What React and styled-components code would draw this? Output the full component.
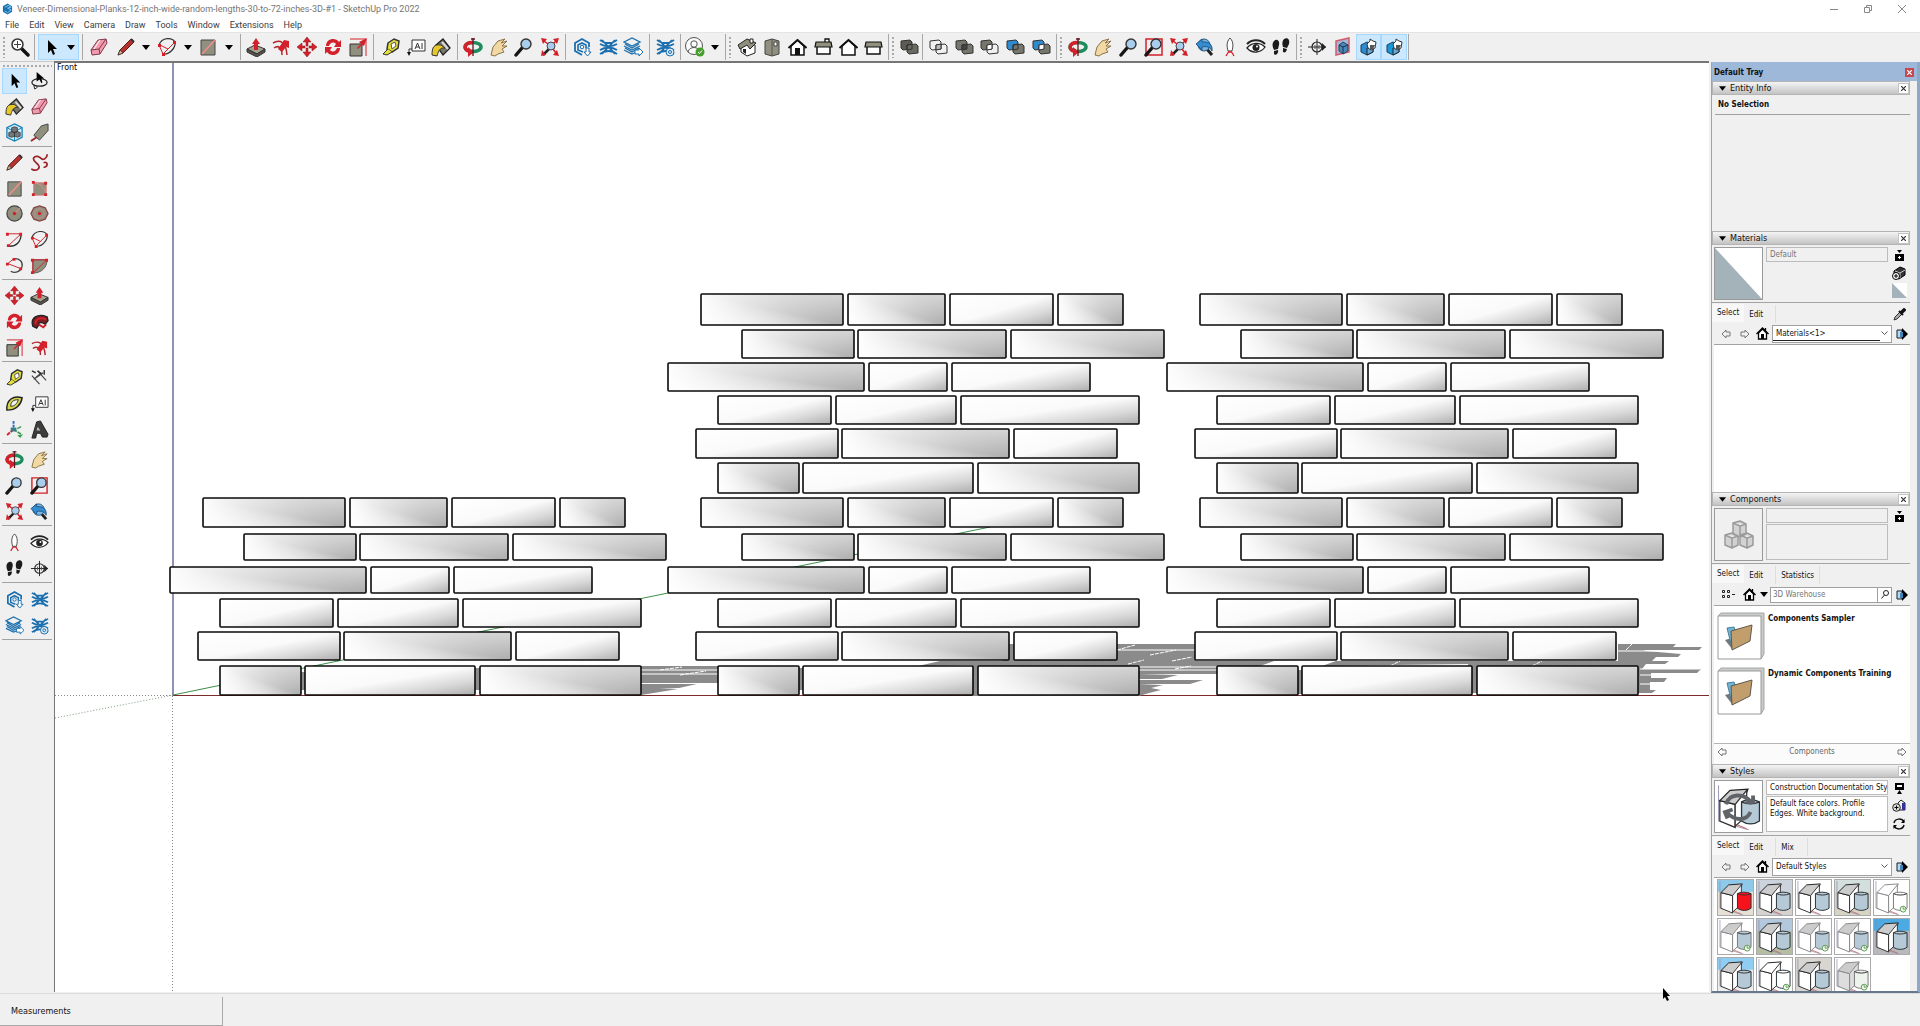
import React from "react";
import styled, { createGlobalStyle, css } from "styled-components";

const Global = createGlobalStyle`
  *, *::before, *::after { box-sizing: border-box; }
  html, body, #root { margin: 0; height: 100%; }
  body { background: #f0f0f0; color: #111; font: 9px/14px "DejaVu Sans Condensed", "DejaVu Sans", sans-serif; overflow: hidden; }
  button, input, select, textarea { font: inherit; color: inherit; margin: 0; border-radius: 0; }
  button { padding: 0; border: 0; background: none; }
  svg { display: block; flex: none; }
  h1, h2, p { margin: 0; font-weight: inherit; font-size: inherit; }
`;

/* ---------- frame ---------- */
const Page = styled.div`
  min-height: 100%; height: 100vh; display: flex; flex-direction: column;
`;
const TitleBar = styled.header`
  display: flex; align-items: center; height: 17px; padding: 0 12px 0 2px; background: #fff; color: #757575;
  font-family: Roboto, sans-serif; font-size: 9px;
  h1 { flex: 1; margin-left: 4px; white-space: nowrap; }
`;
const WindowButton = styled.button`
  width: 12px; height: 12px; margin-left: 22px; display: grid; place-items: center;
`;
const MenuBar = styled.nav`
  display: flex; align-items: center; gap: 10px; height: 15px; padding: 0 5px; background: #fff; color: #3d3d3d;
  font-family: Roboto, sans-serif; font-size: 9px;
`;
const MenuItem = styled.button`line-height: 14px;`;
const TopBar = styled.div`
  display: flex; align-items: stretch; height: 29px; padding: 1px 0; border-top: 1px solid #e4e4e4;
`;
const Workspace = styled.div`flex: 1; display: flex; min-height: 0;`;

const Group = styled.div`
  width: ${(p) => p.$w}px; padding: 0 ${(p) => p.$pad || 2}px; display: flex; flex: none;
`;
const Tool = styled.button`
  flex: 1; display: grid; place-items: center; min-width: 0;
  ${(p) => p.$on && css`background: #cce8ff; box-shadow: inset 0 0 0 1px #a6d8ff;`}
`;
const Split = styled.div`
  flex: 1; display: flex;
  ${(p) => p.$on && css`background: #cce8ff; box-shadow: inset 0 0 0 1px #a6d8ff;`}
`;
const Caret = styled.button`
  width: 16px; display: grid; place-items: center;
`;
const Rule = styled.i`width: 1px; background: #a8a8a8; flex: none;`;
const Grip = styled.i`
  width: 4px; flex: none; margin: 2px 0 2px 2px;
  background: radial-gradient(circle, #aaa 1px, transparent 1px) 0 0 / 4px 4px;
`;

const SideBar = styled.aside`
  width: 54px; flex: none; padding: 2px 2px 0; border-top: 1px solid #c8c8c8;
`;
const SideGrip = styled.i`
  display: block; height: 4px;
  background: radial-gradient(circle, #aaa 1px, transparent 1px) 0 0 / 4px 4px;
`;
const SideGroup = styled.div`
  display: grid; grid-template-columns: 25px 25px; justify-content: space-between; grid-auto-rows: 1fr;
  height: ${(p) => p.$h}px;
`;
const SideRule = styled.hr`height: 1px; border: 0; background: #a2a2a2; margin: 1px 0 3px;`;

const Viewport = styled.main`
  position: relative; flex: 1; min-width: 0; background: #fff; overflow: hidden;
  border: solid #767676; border-width: 2px 0 0 1px; margin-bottom: 1px;
`;
const ViewLabel = styled.span`
  position: absolute; left: 2px; top: -2px; font: 8px/14px "DejaVu Sans", sans-serif; color: #000;
`;
const StatusBar = styled.footer`
  position: relative; height: 33px; flex: none; padding: 3px 0 1px; border-top: 1px solid #dcdcdc;
`;
const Measure = styled.div`
  display: flex; align-items: center; width: 223px; height: 29px; padding-left: 11px;
  border: solid #a9a9a9; border-width: 0 1px 1px 0;
`;
const Pointer = styled.div`position: absolute; right: 250px; top: -6px;`;

/* ---------- tray ---------- */
const Tray = styled.aside`
  width: 209px; flex: none; display: flex; flex-direction: column; margin: 1px 0 0 2px;
  border: solid #8ea9c7; border-width: 0 3px 2px 1px; border-bottom-color: #68788c; background: #f0f0f0; font-size: 8px;
`;
const TrayTitle = styled.div`
  display: flex; align-items: center; justify-content: space-between; height: 19px; padding: 2px 3px 0 2px;
  background: #9db8d8; font-weight: bold;
`;
const TrayClose = styled.button`
  width: 9px; height: 9px; background: #c9484e; color: #fff; display: grid; place-items: center;
`;
const TrayBody = styled.div`
  flex: 1; min-height: 0; display: flex; flex-direction: column; margin-right: 7px; overflow: hidden;
`;
const PanelHead = styled.h2`
  display: flex; align-items: center; height: 14px; flex: none; padding-left: 6px; font-size: 9px;
  background: linear-gradient(#f4f4f4, #c3c3c3); border: 1px solid #b4b4b4;
  span { flex: 1; margin-left: 4px; }
`;
const PanelClose = styled.button`
  width: 11px; height: 11px; background: #fff; border: 1px solid #c4c4c4; display: grid; place-items: center;
`;
const Selection = styled.div`
  height: 136px; flex: none;
  p { margin: 0 0 0 3px; padding: 3px; height: 20px; font-weight: bold; border-bottom: 1px solid #a0a0a0; }
`;
const Summary = styled.div`
  display: flex; gap: 3px; height: 58px; flex: none; padding: 2px 3px 3px 2px; border-bottom: 1px solid #a3a3a3;
`;
const Preview = styled.div`
  width: 49px; height: 53px; flex: none; border: 1px solid #9a9a9a; background: ${(p) => p.$bg || "#f0f0f0"};
  display: grid; place-items: center; overflow: hidden;
`;
const Fields = styled.div`flex: 1; min-width: 0; display: flex; flex-direction: column; gap: 1px;`;
const fieldBox = css`
  width: 100%; padding: 0 3px; border: 1px solid #bcbcbc; background: ${(p) => (p.$white ? "#fff" : "#f0f0f0")};
  color: ${(p) => (p.$white ? "#111" : "#757575")}; outline: 0;
`;
const NameInput = styled.input`${fieldBox} height: 15px; padding-right: 0;`;
const Description = styled.textarea`${fieldBox} flex: 1; resize: none; line-height: 10px; padding-top: 2px; overflow: hidden;`;
const SideIcons = styled.div`
  width: 16px; display: flex; flex-direction: column; justify-content: ${(p) => (p.$top ? "flex-start" : "space-between")}; align-items: center; flex: none;
`;
const IconButton = styled.button`
  display: grid; place-items: center; width: ${(p) => p.$w || 16}px; height: 17px; flex: none;
`;
const Tabs = styled.div`
  display: flex; align-items: center; height: 22px; flex: none; padding: 0 3px 0 0;
`;
const Tab = styled.button`
  height: 18px; min-width: 32px; padding: 0 5px; text-align: left;
  ${(p) => (p.$on ? css`background: #f7f7f7; margin-bottom: 2px;` : css`border-right: 1px solid #dedede; padding-top: 2px;`)}
`;
const Spacer = styled.i`flex: 1;`;
const NavRow = styled.div`
  display: flex; align-items: center; gap: 2px; height: 20px; flex: none; padding: 0 0 2px 4px; margin-left: 2px; border-bottom: 1px solid #a3a3a3;
`;
const Picker = styled.label`
  flex: 1; min-width: 0; height: 18px; display: flex; align-items: center; background: #fff; border: 1px solid #a0a0a0; padding-right: 3px;
  select {
    appearance: none; flex: 1; min-width: 0; height: 14px; border: 0; padding: 0 3px; background: none; outline: 0; margin-right: 13px;
    ${(p) => p.$line && css`border-bottom: 1px solid #222;`}
  }
  svg { margin-left: -12px; }
`;
const SearchBox = styled.form`
  flex: 1; min-width: 0; height: 16px; display: flex; border: 1px solid #a0a0a0; background: #fff;
  input { flex: 1; min-width: 0; border: 0; padding: 0 2px; background: none; outline: 0; }
  input::placeholder { color: #757575; opacity: 1; }
  button { width: 14px; border-left: 1px solid #a0a0a0; display: grid; place-items: center; }
`;
const Blank = styled.div`height: 147px; flex: none; background: #fff; margin-left: 2px;`;
const FolderList = styled.ul`
  list-style: none; margin: 0 0 0 2px; padding: 6px 0 0 3px; height: 138px; flex: none; background: #fff; border-bottom: 1px solid #b5b5b5;
  li { display: flex; gap: 3px; height: 55px; font-weight: bold; white-space: nowrap; }
`;
const Pager = styled.div`
  display: flex; align-items: center; justify-content: space-between; height: 20px; flex: none; padding: 0 0 4px; color: #666; background: #fbfbfb; margin-left: 2px;
`;
const StyleGrid = styled.div`
  flex: 1; min-height: 0; overflow: hidden; display: grid; grid-template-columns: repeat(5, 37px); grid-auto-rows: 37px;
  gap: 2px; padding: 1px 0 0 3px; margin-left: 2px; background: #fff;
`;
const StyleButton = styled.button`border: 1px solid #aaa; overflow: hidden; display: grid; place-items: center;`;

/* ---------- icons ---------- */
const RED = "#d3202a", BLUE = "#1c6fae", STONE = "#918f7e";
const Glass = ({ x = 12, y = 7, r = 5 }) => (
  <>
    <path d={`M${x - r + 1} ${y + r - 1}L2 18`} stroke="#151515" strokeWidth="3.4" strokeLinecap="round" />
    <circle cx={x} cy={y} r={r} fill="#a9cdec" stroke="#333" strokeWidth="1.4" />
  </>
);
const House = ({ roof, chim, fill }) => (
  <>
    {chim && <path d="M12 2h4v6h-4z" fill="#fff" stroke="#111" strokeWidth="1.3" />}
    {roof === "side" ? (
      <><path d="M4 9h13v8H4z" fill="#fff" stroke="#111" strokeWidth="1.5" /><path d="M3 5h15l1 5H2z" fill={STONE} stroke="#111" strokeWidth="1.2" /></>
    ) : (
      <><path d="M4 9v9h13V9L10.500 3z" fill="#fff" stroke="#111" strokeWidth="1.5" /><path d="M1.500 11L10.500 3l9 8" fill="none" stroke="#111" strokeWidth="2" />{fill && <path d="M8 11h5v7H8z" fill="#111" />}</>
    )}
  </>
);
const Solid = ({ a, b, c = "none" }) => (
  <>
    <path d="M2 4l9-1 2 2v7l-9 1-2-2z" fill={a} stroke="#333" />
    <path d="M8 8l9-1 2 2v7l-9 1-2-2z" fill={b} stroke="#333" />
    <path d="M8 8l5-1v5l-5 1z" fill={c} stroke="#333" />
  </>
);
const Waves = () => (
  <path d="M2 3c5 4 12 4 17 0M2 7c5 3 12 3 17 0M2 13c5-3 12-3 17 0M2 17c5-4 12-4 17 0M4 3l13 14M17 3L4 17" fill="none" stroke={BLUE} strokeWidth="1.800" />
);
const Cube = ({ top = "#2f8bd0" }) => (
  <>
    <path d="M3 8l6-3 6 3v7l-6 3-6-3z" fill={top} stroke="#173d5c" />
    <path d="M9 11l6-3v7l-6 3z" fill="#68a9d8" stroke="#222" />
    <path d="M9 7l3-3V2l3 2 3 1-1 6-4 2-3-2z" fill="#fff" stroke="#333" /><path d="M12 8h5l-2 4h-3z" fill="#555" />
  </>
);
const ICONS = {
  search: <><path d="M11 11l7 7" stroke="#111" strokeWidth="3.400" strokeLinecap="round" /><circle cx="7.500" cy="7.500" r="5.500" fill="#fff" stroke="#333" strokeWidth="1.500" /><path d="M7.500 4v7M4 7.500h7" stroke="#444" /></>,
  arrow: <path d="M7 3v13l3-3 2 5 2-1-2-5h4z" fill="#000" />,
  lasso: <><ellipse cx="10" cy="12" rx="8" ry="4" fill="none" stroke="#222" strokeWidth="1.300" /><path d="M7 1v10l3-2 2 4 1-1-1-4h3z" fill="#000" /><path d="M4 15l1 4 3-2" fill="none" stroke="#222" /></>,
  eraser: <><path d="M2 13L9 3l8-1 1 4-7 11-8 1z" fill="#f29aae" stroke="#7e3949" /><path d="M2 13l8-1 1 5M10 12l7-10" fill="none" stroke="#7e3949" /><path d="M5 12l6-9" stroke="#fff" /></>,
  pencil: <><path d="M2 18l2-5L15 2l3 3L7 16z" fill="#b6322f" stroke="#5b1b16" /><path d="M2 18l2-5 3 3z" fill="#d5b28a" stroke="#333" strokeWidth=".7" /><path d="M15 2l3 3" stroke="#333" strokeWidth="2" /></>,
  freehand: <path d="M2 17c5 3 9-1 7-4S2 8 4 5s6-1 8 1 6-1 6-4M15 10c4-1 4 4 0 5" fill="none" stroke="#9c2329" strokeWidth="1.800" strokeLinecap="round" />,
  arc: <><path d="M2 8C5 0 15 0 18 5c1 5-5 13-12 12" fill="none" stroke="#333" strokeWidth="1.200" /><path d="M2 8l4 9L18 5M3 8l8 4" fill="none" stroke={RED} /><path d="M1 7h3v3H1zM5 16h3v3H5zM16 4h3v3h-3z" fill={RED} /></>,
  arc1: <><path d="M2 4h15L3 17" fill="none" stroke={RED} /><path d="M17 4c0 8-5 14-14 13" fill="none" stroke="#333" strokeWidth="1.400" /><path d="M1 3h3v3H1zM15 3h3v3h-3zM2 15h3v3H2z" fill={RED} /></>,
  arc3: <><path d="M9 3c6-1 10 3 9 8s-7 8-12 5" fill="none" stroke="#444" strokeWidth="1.300" /><path d="M9 3L3 8l13 5" fill="none" stroke={RED} /><path d="M1 7h3v3H1zM8 2h3v3H8zM15 12h3v3h-3z" fill={RED} /></>,
  pie: <><path d="M3 4h15c0 8-6 14-15 14z" fill={STONE} stroke="#555" /><path d="M3 18V4h15L3 18" fill="none" stroke={RED} /><path d="M1 3h3v3H1zM16 3h3v3h-3zM1 16h3v3H1z" fill={RED} /></>,
  rect: <><path d="M3 3h14v15H3z" fill={STONE} stroke="#444" /><path d="M4 17L17 3" stroke="#ef8d8d" strokeWidth="1.600" /></>,
  rotrect: <><path d="M4 4h13v13H4z" fill={STONE} stroke="#c77" /><path d="M4 4c6 0 12 5 13 13" fill="none" stroke="#e88" /><path d="M2 2h3v3H2zM15 3h3v3h-3zM2 15h3v3H2zM15 15h3v3h-3z" fill={RED} /></>,
  circle: <><circle cx="10" cy="10" r="8" fill={STONE} stroke="#444" strokeWidth="1.300" /><path d="M10 10l6-6" stroke="#f28a8a" /><circle cx="10" cy="10" r="1.800" fill={RED} /></>,
  polygon: <><path d="M10 2l6 2 3 6-3 6-6 2-6-2-3-6 3-6z" fill={STONE} stroke="#844" strokeWidth="1.300" /><circle cx="10" cy="10" r="5" fill="none" stroke="#c49090" /><circle cx="10" cy="10" r="1.800" fill={RED} /></>,
  push: <><path d="M1 12l8-4 10 4-8 5z" fill="#a5a28f" stroke="#333" /><path d="M1 12v3l10 5 8-5v-3l-8 5z" fill="#55544b" stroke="#333" /><path d="M8 13V7H6l4-6 4 6h-2v6z" fill={RED} /></>,
  offset: <><path d="M2 6c7-4 13-1 14 12M3 11c4-3 8-1 8 7" fill="none" stroke="#b3252c" strokeWidth="1.500" /><path d="M7 12l6-9 5 1v7l-3-1-4 5z" fill={RED} /></>,
  move: <path d="M10 0l4 5h-3v4h-2V5H6zM10 20l-4-5h3v-4h2v4h3zM0 10l5-4v3h3v2H5v3zM20 10l-5 4v-3h-3V9h3V6z" fill={RED} stroke="#8e1118" strokeWidth=".5" />,
  rotate: <path d="M3 9c0-8 10-9 13-4l2-2v7h-7l2-3c-3-3-6-1-7 2zM17 11c0 8-10 9-13 4l-2 2v-7h7l-2 3c3 3 6 1 7-2z" fill={RED} />,
  scale: <><path d="M2 7h12v12H2z" fill={STONE} stroke="#333" /><path d="M2 2h16v17" fill="none" stroke={RED} /><path d="M9 11l4-4-2-2 8-4-3 8-2-1-4 4z" fill={RED} /></>,
  follow: <><path d="M3 15C0 6 8 1 18 5l1 4-3 4c-3-3-8-2-7 1l-2 3z" fill="#7a1e22" stroke="#222" strokeWidth="1.400" /><path d="M6 13c-1-6 5-8 11-5M9 13l5 3 3-3" fill="none" stroke={RED} strokeWidth="2" /></>,
  tape: <><path d="M7 6l6-4 5 2-1 7-6 4-5-3z" fill="#e4df3a" stroke="#333" strokeWidth="1.500" /><path d="M10 7l4-2 1 4-4 3z" fill="#fff" stroke="#555" /><path d="M7 12l-5 5 4 1 5-3" fill="#e4df3a" stroke="#333" /></>,
  text: <><path d="M6 3h13v11H6z" fill="#fff" stroke="#333" /><path d="M9 12l2.500-6L14 12M10 10h3M16 6v6" fill="none" stroke="#333" /><path d="M6 12H3v5" fill="none" stroke="#333" /><path d="M1 15h4l-2 4z" fill="#111" /></>,
  paint: <><path d="M5 8l7-6 7 9-7 7z" fill="#77766a" stroke="#222" strokeWidth="1.300" /><path d="M1 18c0-8 2-11 9-10l4 3c-6-1-7 5-8 8z" fill="#e5c92b" stroke="#333" /><path d="M11 5l6 7" stroke="#ddd" strokeWidth="2" /></>,
  orbit: <><ellipse cx="10" cy="10" rx="8" ry="4.500" fill="none" stroke="#1e8c5d" strokeWidth="3.500" /><path d="M10 5.500C1 5 0 13 6 14" fill="none" stroke={RED} strokeWidth="3.500" /><path d="M5 10l6 5-6 5z" fill={RED} /><path d="M10 1v18M8 2h4" stroke="#5e1820" strokeWidth="1.300" /></>,
  pan: <path d="M2 18l2-8 5-6 7-2-4 4 6-2-5 5 5 0-5 3 2 3-6 2-3 2z" fill="#f2d9a4" stroke="#8b7347" />,
  zoom: <Glass />,
  window: <><path d="M2 2h16v16H2z" fill="none" stroke={RED} strokeWidth="1.500" /><Glass /></>,
  extents: <><path d="M9 12l-6 6" stroke="#222" strokeWidth="2.500" /><circle cx="11" cy="9" r="4" fill="#a9cdec" stroke="#444" /><path d="M1 1l6 1-4 5zM19 1l-6 1 4 5zM19 19l-6-1 4-5zM1 19l1-6 4 5z" fill={RED} /><path d="M4 4l4 3M16 4l-2 2M16 16l-3-4" stroke={RED} strokeWidth="1.500" /></>,
  prev: <><path d="M11 11l6 7" stroke="#222" strokeWidth="3" /><circle cx="9" cy="8" r="6" fill="#7cb5e4" stroke="#23567d" /><path d="M1 7l6-5v3c7-1 11 3 10 9-2-4-5-5-10-4v3z" fill="#358cd0" stroke="#174973" strokeWidth=".8" /></>,
  hex: <><path d="M17 10V6l-7-4-7 4v8l7 4" fill="none" stroke={BLUE} strokeWidth="1.800" /><path d="M14 11V8l-4-2-4 2v5l5 2" fill="none" stroke={BLUE} strokeWidth="1.600" /><circle cx="10" cy="10" r="1.800" fill="none" stroke={BLUE} /><path d="M14 11h3v4h2l-3.500 4-3.500-4h2z" fill="#fff" stroke={BLUE} /></>,
  waves: <Waves />,
  layers: <><path d="M1 5l8-4 8 4-8 4zM1 9l8 4 8-4M1 13l8 4 5-2M2 7l7 4 7-4M2 11l7 4 7-4" fill="none" stroke={BLUE} strokeWidth="1.300" /><path d="M12 13h4v-2l4 4-4 4v-2h-4z" fill="#fff" stroke={BLUE} /></>,
  manager: <><Waves /><circle cx="15" cy="15" r="4" fill="#d9ebf7" stroke={BLUE} /><circle cx="15" cy="15" r="1.500" fill="none" stroke={BLUE} /></>,
  user: <><circle cx="9" cy="9" r="8.500" fill="#fafafa" stroke="#555" /><circle cx="9" cy="7" r="3.200" fill="none" stroke="#555" /><path d="M3 15c1-6 11-6 12 0" fill="none" stroke="#555" /><circle cx="15" cy="15" r="4.500" fill="#46a12c" /><path d="M13 15l1.500 1.500L17 13.500" fill="none" stroke="#fff" /></>,
  iso: <><path d="M4 9l6-5 8 4v8l-8 3-6-4z" fill="#fff" stroke="#222" /><path d="M1 8l9-6 9 4-6 6-3-4-7 4z" fill={STONE} stroke="#222" /><path d="M6 12h3v5l-3-2z" fill="#222" /><path d="M13 2h3v4h-3z" fill="#fff" stroke="#222" /></>,
  top: <><path d="M3 4l7-2 7 2v13l-7 2-7-2z" fill={STONE} stroke="#444" /><path d="M10 2v17" stroke="#555" /><path d="M12 5h3v4h-3z" fill="#fff" stroke="#444" /></>,
  front: <House fill />, right: <House roof="side" chim />, back: <House />, left: <House roof="side" />,
  solid1: <Solid a="#5c5c55" b="#6b6a61" />, solid2: <Solid a="none" b="none" c="#bbb" />, solid3: <Solid a="#77766c" b="#77766c" c="#444" />,
  solid4: <Solid a="#77766c" b="none" c="#fff" />, solid5: <Solid a="#2f8bd0" b="#77766c" />, solid6: <Solid a="#2f8bd0" b="#77766c" c="#fff" />,
  camera: <><path d="M10 1c4 4 3 9 2 13H8C7 10 6 5 10 1z" fill="#fff" stroke="#444" /><path d="M6 19l3-5M14 19l-3-5M8 15h4" stroke={RED} strokeWidth="1.300" /></>,
  eye: <><path d="M1 11c5-6 13-6 18-1-4 6-13 7-18 1z" fill="#fff" stroke="#222" strokeWidth="1.300" /><path d="M1 7c5-5 13-5 18 0" fill="none" stroke="#222" strokeWidth="2" /><circle cx="10" cy="10.500" r="3.500" fill="#222" /><circle cx="11" cy="9.500" r="1" fill="#fff" /></>,
  feet: <><path d="M3 4c3-3 6 0 5 4l-1 4-4 1C1 9 1 6 3 4zM3 14l4-1c1 4-3 6-4 4zM13 2c4-2 6 1 5 5l-2 4-4-1c-1-3-1-6 1-8zM12 11l4 1c-1 5-5 4-4 1z" fill="#1b1b1b" /></>,
  section: <><path d="M10 2v16M1 10h18" stroke="#222" /><circle cx="10" cy="10" r="5" fill="none" stroke="#222" strokeWidth="1.200" /><path d="M15 6l4 4-4 4z" fill="#222" /><path d="M8 8v4M12 8v4" stroke="#555" /></>,
  plane: <><path d="M3 4l13-3v14L3 18z" fill="#9fb8dc" stroke="#d65a6c" strokeWidth="1.500" /><path d="M6 8l4-3 5 3v6l-5 3-4-3z" fill="#4787bd" stroke="#345" /><path d="M10 10v7M6 8l4 2 5-2" fill="none" stroke="#234" /></>,
  cut: <Cube />, fill: <Cube top="#1a98d8" />,
  component: <><path d="M10 1l8 4v10l-8 4-8-4V5z" fill="#d5eefb" stroke="#1784b8" strokeWidth="1.400" /><path d="M2 5l8 4 8-4M10 9v10" fill="none" stroke="#1784b8" /><g fill="#73777a" stroke="#333" strokeWidth=".8"><path d="M7 5l3-1 3 1v4l-3 1-3-1zM4 10l3-1 3 1v4l-3 1-3-1zM10 10l3-1 3 1v4l-3 1-3-1z" /></g></>,
  tag: <><path d="M4 13L12 3l7-2v7l-9 10z" fill="#918f7e" stroke="#444" /><path d="M1 19l6-4" stroke="#9b2730" strokeWidth="2" /></>,
  dim: <><path d="M2 8l8 9M8 3l9 10M5 11l7-6M4 12l10-7" fill="none" stroke="#444" strokeWidth="1.200" /><path d="M2 3l4 2M15 2v5M12 6l-4-3" stroke="#333" strokeWidth="1.500" /></>,
  protractor: <><path d="M2 17C1 6 9 1 18 4 17 11 12 17 2 17z" fill="#d6d44a" stroke="#222" strokeWidth="1.500" /><path d="M6 13c0-5 3-7 8-7-1 4-4 7-8 7z" fill="#f0f0f0" stroke="#333" /></>,
  axes: <><path d="M9 1v9" stroke="#2c69b7" strokeWidth="2" strokeDasharray="3 1" /><path d="M9 10l8 5" stroke="#3b9e50" strokeWidth="2" strokeDasharray="4 1" /><path d="M9 10l-7 6" stroke={RED} strokeWidth="2" strokeDasharray="4 1" /><path d="M13 9l4-2" stroke="#3b9e50" strokeWidth="1.500" /><path d="M6 8h6v4H6z" fill="#367b8c" /><path d="M13 16l6-1-3 4z" fill="#3b9e50" /></>,
  text3d: <><path d="M7 2l4-1 8 14-1 3h-5l-2-4H7l-1 5H2z" fill="#3d3d3b" stroke="#222" /><path d="M7 11l1-4 3 4z" fill="#bbb" /></>,
};
const Icon = ({ name, size = 20 }) => (
  <svg width={size} height={size} viewBox="0 0 20 20" fill="none" aria-hidden="true">{ICONS[name]}</svg>
);
const Down = ({ w = 8 }) => <svg width={w} height="5" viewBox="0 0 8 5"><path d="M0 0h8L4 5z" fill="#000" /></svg>;
const Cross = ({ c = "#333" }) => <svg width="5" height="5" viewBox="0 0 5 5"><path d="M0 0l5 5M5 0L0 5" stroke={c} strokeWidth="1.200" /></svg>;
const Nav = ({ back }) => (
  <svg width="11" height="10" viewBox="0 0 11 10"><path d={back ? "M1 5l4-4v2h4v4H5v2z" : "M10 5L6 1v2H2v4h4v2z"} fill="none" stroke="#777" /></svg>
);
const Home = () => (
  <svg width="13" height="13" viewBox="0 0 13 13"><path d="M2.500 6v6h8V6l-4-4z" fill="#fff" stroke="#000" strokeWidth="1.300" /><path d="M.5 7l6-6 6 6M9.500 1v3" fill="none" stroke="#000" strokeWidth="1.300" /><path d="M5 7h3v5H5z" /></svg>
);
const Details = () => (
  <svg width="12" height="12" viewBox="0 0 12 12"><path d="M1 2h5v8H1z" fill="#b9d8ea" stroke="#123" /><path d="M6 0l6 6-6 6z" /><path d="M4 4v5h3V4z" fill="#3c86bc" /></svg>
);
const Chevron = () => <svg width="7" height="5" viewBox="0 0 7 5"><path d="M.5 .5l3 3 3-3" fill="none" stroke="#555" /></svg>;
const Toggle = ({ up }) => (
  <svg width="9" height="11" viewBox="0 0 9 11">
    {up ? <><path d="M0 0h9v7H0zM2 11l2.500-4L7 11z" /><path d="M2 3h5" stroke="#fff" strokeWidth="2" /></> : <><path d="M0 4h9v7H0zM2 0h5L4.500 3z" /><path d="M3 7.500h3M4.500 6v3" stroke="#fff" /></>}
  </svg>
);
const CreateBox = () => (
  <svg width="14" height="14" viewBox="0 0 14 14"><path d="M2 5l6-4 5 2v6l-6 4-5-2z" fill="#333" stroke="#000" /><path d="M3 5l5 2 5-3M8 7v5" stroke="#ccc" fill="none" /><circle cx="4" cy="10" r="3.500" fill="#fff" stroke="#000" /><path d="M2 10h4M4 8v4" stroke="#000" /></svg>
);
const CreateStyle = () => (
  <svg width="14" height="14" viewBox="0 0 14 14"><path d="M6 4l3-3 4 3v7H7z" fill="#eee" stroke="#222" /><path d="M10 4h3v7h-3z" fill="#32329a" /><circle cx="4.500" cy="8.500" r="3.800" fill="#ddd" stroke="#222" /><path d="M2.500 8.500h4M4.500 6.500v4" stroke="#000" /></svg>
);
const Refresh = () => (
  <svg width="12" height="12" viewBox="0 0 12 12"><path d="M1 5c1-5 8-5 10-1M11 7c-1 5-8 5-10 1" fill="none" stroke="#111" strokeWidth="1.500" /><path d="M11.500 1v4H8zM.5 11V7H4z" /></svg>
);
const Half = ({ w, h }) => (
  <svg width={w} height={h} viewBox="0 0 10 10" preserveAspectRatio="none"><path d="M0 0h10v10H0z" fill="#fff" /><path d="M0 0l10 10H0z" fill="#a4b2ba" /></svg>
);
const Dropper = () => (
  <svg width="13" height="13" viewBox="0 0 13 13"><path d="M1 12l1-3 5-5 2 2-5 5z" fill="#aaa" stroke="#333" /><path d="M6 3l4 4M8 4l3-3 1 1-3 3z" stroke="#111" strokeWidth="2" /></svg>
);
const Blocks = () => (
  <svg width="32" height="32" viewBox="0 0 32 32"><g fill="#d2d2d2" stroke="#9b9b9b" strokeWidth="1.500" strokeLinejoin="round">
    <path d="M10 4l7-2 6 3v10l-6 3-7-3zM10 4l7 3 6-2M17 7v11M2 16l7-2 6 3v9l-6 3-7-3zM2 16l7 3 6-2M9 19v10M17 16l7-2 6 3v9l-6 3-7-3zM17 16l7 3 6-2M24 19v10" /></g></svg>
);
const Folder = () => (
  <svg width="48" height="48" viewBox="0 0 48 48">
    <path d="M1 4l3-3h43v41l-3 5" fill="#c9cccb" stroke="#a5a5a5" /><path d="M1 4h43v43H1z" fill="#fff" stroke="#999" />
    <path d="M8 28l7-2v11z" fill="#777" /><path d="M10 16l7-1 1 3 6 1-5 15-5-2z" fill="#72b4d6" stroke="#477f9e" /><path d="M14 19l21-6-2 16-18 9z" fill="#c39e6d" stroke="#5d584e" />
  </svg>
);
const Scene = ({ size = 35, sky = "#fff", ground = "#fff", cyl = "#b5c9d6", face = "#fff", roof = "#ccc", badge, arrows, fade }) => (
  <svg width={size} height={size} viewBox="0 0 36 36">
    <path d="M0 0h36v36H0z" fill={ground} /><path d="M0 0h36v12H0z" fill={sky} />
    <path d="M2 1v28l24 7" fill="none" stroke="#8b8bb0" strokeWidth=".7" /><path d="M9 29l15 6" stroke="#c66" strokeWidth=".8" />
    <path d="M3 13v16l12 5V16z" fill={face} stroke={fade ? "#888" : "#333"} />
    <path d="M3 13l8-8 14-1-5 12h-5z" fill={roof} stroke={fade ? "#888" : "#222"} />
    <path d="M15 16l9-11v20l-9 8z" fill={face} stroke={fade ? "#888" : "#333"} />
    <path d="M20 14c3-2 10-2 14 0v15c-4 3-10 3-14 0z" fill={cyl} stroke={fade ? "#777" : "#263238"} />
    <path d="M20 14c4 2 10 2 14 0" fill="none" stroke="#333" />
    {badge && <><circle cx="30" cy="30" r="3" fill="#f3faef" stroke="#5e9953" /><path d="M30 28v2h2" fill="none" stroke="#5e9953" /></>}
    {arrows && <path d="M8 16c2-9 14-9 19-2M27 22c-3 7-12 7-18 1M23 14h6v-5M13 20l-6 2 2 5" fill="none" stroke="#606468" strokeWidth="3" />}
  </svg>
);

/* ---------- model ---------- */
// Courses of the veneer pattern; each plank is [left, right, light face].
const COURSES = {
  A: [[701, 843, 0], [848, 945, 0], [950, 1053, 1], [1058, 1123, 0]],
  B: [[742, 854, 0], [858, 1006, 0], [1011, 1164, 0]],
  C: [[668, 864, 0], [869, 947, 1], [952, 1090, 1]],
  D: [[718, 831, 1], [836, 956, 1], [961, 1139, 1]],
  E: [[696, 838, 1], [842, 1009, 0], [1014, 1117, 1]],
  F: [[718, 799, 0], [803, 973, 1], [978, 1139, 0]],
};
const LOWER = [["A", 498, 527], ["B", 534, 560], ["C", 567, 593], ["D", 599, 627], ["E", 632, 660], ["F", 666, 695]];
const UPPER = [["A", 294, 325], ["B", 330, 358], ["C", 363, 391], ["D", 396, 424], ["E", 429, 458], ["F", 463, 493]];
const Wall = ({ dx, rows }) => rows.flatMap(([k, y1, y2]) => COURSES[k].map(([a, b, light]) => {
  const box = { x: a + dx, y: y1, width: b - a, height: y2 - y1, rx: 1 };
  return (
    <g key={`${k}${y1}-${a}`}>
      <rect {...box} fill={light ? "url(#light)" : "url(#shade)"} />
      {!light && <rect {...box} fill="url(#crease)" />}
      <rect {...box} fill="none" stroke="#0a0a0a" strokeWidth="1.6" />
    </g>
  );
}));
const Model = () => (
  <svg width="100%" height="100%" role="img" aria-label="Veneer plank walls, front view">
    <defs>
      <linearGradient id="light" x1="0" y1="0" x2="1" y2="1"><stop offset="0" stopColor="#fff" /><stop offset=".5" stopColor="#fafafa" /><stop offset=".75" stopColor="#d9d9d9" /><stop offset="1" stopColor="#adadad" /></linearGradient>
      <linearGradient id="shade"><stop offset="0" stopColor="#fdfdfd" /><stop offset=".5" stopColor="#d8d8d8" /><stop offset="1" stopColor="#adadad" /></linearGradient>
      <linearGradient id="crease" x1="0" y1="1" x2="1" y2="0"><stop offset="0" stopColor="#fff" stopOpacity=".8" /><stop offset=".5" stopColor="#fff" stopOpacity="0" /><stop offset="1" stopColor="#fff" stopOpacity=".5" /></linearGradient>
    </defs>
    <g transform="translate(-55 -63)">
      <g fill="none">
        <path d="M173 63V695" stroke="#6c6c9e" strokeWidth="1.500" />
        <path d="M172.500 696V1000M55 695.500H173" stroke="#888" strokeDasharray="1 2" />
        <path d="M55 718L173 695" stroke="#7d9a7d" strokeDasharray="1 2" />
        <path d="M173 695.500H1709" stroke="#7c2b2b" />
        <path d="M173 695L668 593L990 527" stroke="#3c8f47" />
      </g>
      <g fill="#8b8b8b">
        <path d="M301 672h4v18h-4zM475 668h5v22h-5zM641 666h77v17h-77zM641 684h56l-18 4h-20l19 1-37 6z" />
        <path d="M798 668h5v22h-5zM918 666l22-5h62l6-8v-9h188v22h22v8h-79l39 1-16 4h-23v1h64l-13 4h-30l-21 1h24l-12 3 10 2-12 3-10 3H972v-31z" />
        <path d="M1196 661h78l-14 5h-64zM1322 666l14-5h282v-17h58l-3 3h29l-3 3h-56l3 1 35 3-3 3h-22l-4 4h17l-4 3h-19l-4 5h59l-4 4h-46v5h16l-3 4h-14v8h6l-4 3H1468v-29z" />
        <path d="M1298 670h5v24h-5z" />
      </g>
      <g stroke="#fff" fill="none">
        <path d="M641 670h77M641 674h77M1117 650h79M1139 667h78M1139 670h78M1618 651h90M1640 669h60M1640 675h40M1640 684h40" />
        <path d="M660 670l22-3M680 675l26-4M1117 650l18-5M1150 655l26-5M1128 664l16-4M1172 661l20-4M1175 669l16-3M1390 666l10-5M1532 666l10-5M1626 650l6-6" strokeDasharray="4 1" />
      </g>
      <Wall dx={-498} rows={LOWER} />
      <Wall dx={0} rows={[...UPPER, ...LOWER]} />
      <Wall dx={499} rows={[...UPPER, ...LOWER]} />
    </g>
  </svg>
);

/* ---------- composition ---------- */
const Tools = ({ w, pad, items, on = [] }) => (
  <Group $w={w} $pad={pad}>{items.map((n) => <Tool key={n} aria-label={n} $on={on.includes(n)}><Icon name={n} /></Tool>)}</Group>
);
const SplitTool = ({ name, on }) => (
  <Split $on={on}><Tool aria-label={name}><Icon name={name} /></Tool><Caret aria-label={`${name} options`}><Down /></Caret></Split>
);
const SIDE = [
  [77, ["arrow", "lasso", "paint", "eraser", "component", "tag"]],
  [128, ["pencil", "freehand", "rect", "rotrect", "circle", "polygon", "arc1", "arc", "arc3", "pie"]],
  [77, ["move", "push", "rotate", "follow", "scale", "offset"]],
  [77, ["tape", "dim", "protractor", "text", "axes", "text3d"]],
  [77, ["orbit", "pan", "zoom", "window", "extents", "prev"]],
  [52, ["camera", "eye", "feet", "section"]],
  [52, ["hex", "waves", "layers", "manager"]],
];
const Head = ({ children }) => (
  <PanelHead><Down w={7} /><span>{children}</span><PanelClose aria-label={`Close ${children}`}><Cross /></PanelClose></PanelHead>
);
const NavButtons = () => (
  <><IconButton aria-label="Back"><Nav back /></IconButton><IconButton aria-label="Forward"><Nav /></IconButton><IconButton aria-label="Home"><Home /></IconButton></>
);
const SCENES = [
  { sky: "#8ec9ea", ground: "#e6e0d5", cyl: "#f5141c" }, { sky: "#ccd3dc", ground: "#d5d2cf" }, {}, { sky: "#d2dfdc", ground: "#d6d4c2" }, { fade: 1, cyl: "#fff", roof: "#fff", badge: 1 },
  { badge: 1, fade: 1 }, { sky: "#b3c7dd", ground: "#b5bea2" }, { badge: 1, fade: 1 }, { badge: 1, fade: 1 }, { sky: "#4ca9e2", ground: "#b9b9bd" },
  { sky: "#8fcdf2", ground: "#eee" }, { cyl: "#fff", roof: "#fff", badge: 1 }, { sky: "#d9d6d2", ground: "#d9d6d2" }, { cyl: "#eef3ee", face: "#ddd", badge: 1, fade: 1 },
];

export default function App() {
  return (
    <Page>
      <Global />
      <TitleBar>
        <svg width="11" height="12" viewBox="0 0 12 12"><path d="M6 0l5 3v6l-5 3-5-3V3z" fill="#1671b1" /><path d="M3 4l4-2 3 2-4 1 4 2-4 3-3-2" fill="none" stroke="#8cc8ec" /></svg>
        <h1>Veneer-Dimensional-Planks-12-inch-wide-random-lengths-30-to-72-inches-3D-#1 - SketchUp Pro 2022</h1>
        <WindowButton aria-label="Minimize"><svg width="8" height="8"><path d="M0 4.500h8" stroke="#888" /></svg></WindowButton>
        <WindowButton aria-label="Restore"><svg width="8" height="8" fill="none" stroke="#888"><path d="M.5 2.500h5v5h-5zM2.500 2V.5h5v5H6" /></svg></WindowButton>
        <WindowButton aria-label="Close"><svg width="8" height="8"><path d="M0 0l8 8M8 0L0 8" stroke="#888" /></svg></WindowButton>
      </TitleBar>
      <MenuBar>
        {["File", "Edit", "View", "Camera", "Draw", "Tools", "Window", "Extensions", "Help"].map((m) => <MenuItem key={m}>{m}</MenuItem>)}
      </MenuBar>
      <TopBar>
        <Grip /><Tools w={28} items={["search"]} /><Rule />
        <Group $w={47} $pad={3}><SplitTool name="arrow" on /></Group><Rule />
        <Group $w={157}><Tool aria-label="eraser"><Icon name="eraser" /></Tool>
          <Group $w={126} $pad={1}><SplitTool name="pencil" /><SplitTool name="arc" /><SplitTool name="rect" /></Group></Group><Rule />
        <Tools w={132} items={["push", "offset", "move", "rotate", "scale"]} /><Rule />
        <Tools w={83} pad={4} items={["tape", "text", "paint"]} /><Rule />
        <Tools w={107} items={["orbit", "pan", "zoom", "extents"]} /><Rule />
        <Tools w={83} pad={3} items={["hex", "waves", "layers"]} /><Rule />
        <Tools w={30} items={["manager"]} /><Rule />
        <Group $w={44} $pad={2}><SplitTool name="user" /></Group><Rule /><Grip />
        <Tools w={156} items={["iso", "top", "front", "right", "back", "left"]} /><Rule /><Grip />
        <Tools w={27} pad={1} items={["solid1"]} /><Rule />
        <Tools w={133} items={["solid2", "solid3", "solid4", "solid5", "solid6"]} /><Rule /><Grip />
        <Tools w={233} items={["orbit", "pan", "zoom", "window", "extents", "prev", "camera", "eye", "feet"]} /><Rule /><Grip />
        <Tools w={105} pad={1} items={["section", "plane", "cut", "fill"]} on={["cut", "fill"]} /><Rule />
      </TopBar>
      <Workspace>
        <SideBar>
          <SideGrip />
          {SIDE.map(([h, items], i) => (
            <React.Fragment key={i}>
              <SideGroup $h={h}>{items.map((n) => <Tool key={n} aria-label={n} $on={n === "arrow"}><Icon name={n} size={19} /></Tool>)}</SideGroup>
              <SideRule />
            </React.Fragment>
          ))}
        </SideBar>
        <Viewport><Model /><ViewLabel>Front</ViewLabel></Viewport>
        <Tray>
          <TrayTitle>Default Tray<TrayClose aria-label="Close tray"><Cross c="#fff" /></TrayClose></TrayTitle>
          <TrayBody>
            <Head>Entity Info</Head>
            <Selection><p>No Selection</p></Selection>

            <Head>Materials</Head>
            <Summary>
              <Preview $bg="#fff"><Half w={47} h={51} /></Preview>
              <Fields><NameInput aria-label="Material name" defaultValue="Default" /></Fields>
              <SideIcons><IconButton aria-label="Secondary pane"><Toggle /></IconButton><IconButton aria-label="Create material"><CreateBox /></IconButton><IconButton aria-label="Default material"><Half w={15} h={15} /></IconButton></SideIcons>
            </Summary>
            <Tabs><Tab $on>Select</Tab><Tab>Edit</Tab><Spacer /><IconButton aria-label="Sample paint"><Dropper /></IconButton></Tabs>
            <NavRow><NavButtons />
              <Picker $line><select aria-label="Material collection"><option>Materials&lt;1&gt;</option></select><Chevron /></Picker>
              <IconButton aria-label="Details"><Details /></IconButton>
            </NavRow>
            <Blank />

            <Head>Components</Head>
            <Summary>
              <Preview><Blocks /></Preview>
              <Fields><NameInput aria-label="Component name" /><Description aria-label="Component description" /></Fields>
              <SideIcons $top><IconButton aria-label="Secondary pane"><Toggle /></IconButton></SideIcons>
            </Summary>
            <Tabs><Tab $on>Select</Tab><Tab>Edit</Tab><Tab>Statistics</Tab></Tabs>
            <NavRow>
              <IconButton $w={20} aria-label="View options"><svg width="13" height="9" viewBox="0 0 13 9" fill="none" stroke="#222"><path d="M.5.5h2v2h-2zM5.500.5h2v2h-2zM.5 5.500h2v2h-2zM5.500 5.500h2v2h-2zM10 4.500h3" /></svg></IconButton>
              <IconButton $w={18} aria-label="Home"><Home /></IconButton><IconButton $w={8} aria-label="Navigation"><Down /></IconButton>
              <SearchBox><input aria-label="Search 3D Warehouse" placeholder="3D Warehouse" /><button type="button" aria-label="Search"><svg width="8" height="9" viewBox="0 0 8 9" fill="none" stroke="#222"><circle cx="5" cy="3" r="2.500" /><path d="M3.500 5L.5 8.500" /></svg></button></SearchBox>
              <IconButton aria-label="Details"><Details /></IconButton>
            </NavRow>
            <FolderList><li><Folder />Components Sampler</li><li><Folder />Dynamic Components Training</li></FolderList>
            <Pager><IconButton aria-label="Previous"><Nav back /></IconButton>Components<IconButton aria-label="Next"><Nav /></IconButton></Pager>

            <Head>Styles</Head>
            <Summary>
              <Preview $bg="#fff"><Scene size={46} arrows /></Preview>
              <Fields><NameInput $white aria-label="Style name" defaultValue="Construction Documentation Sty" /><Description $white aria-label="Style description" defaultValue="Default face colors. Profile Edges. White background." /></Fields>
              <SideIcons><IconButton aria-label="Secondary pane"><Toggle up /></IconButton><IconButton aria-label="Create style"><CreateStyle /></IconButton><IconButton aria-label="Update style"><Refresh /></IconButton></SideIcons>
            </Summary>
            <Tabs><Tab $on>Select</Tab><Tab>Edit</Tab><Tab>Mix</Tab></Tabs>
            <NavRow><NavButtons />
              <Picker><select aria-label="Style collection"><option>Default Styles</option></select><Chevron /></Picker>
              <IconButton aria-label="Details"><Details /></IconButton>
            </NavRow>
            <StyleGrid>{SCENES.map((s, i) => <StyleButton key={i} aria-label={`Style ${i + 1}`}><Scene {...s} /></StyleButton>)}</StyleGrid>
          </TrayBody>
        </Tray>
      </Workspace>
      <StatusBar>
        <Measure>Measurements</Measure>
        <Pointer><svg width="8" height="13" viewBox="0 0 8 13"><path d="M1 0v11l2-2 2 4 2-1-2-4h3z" /></svg></Pointer>
      </StatusBar>
    </Page>
  );
}
